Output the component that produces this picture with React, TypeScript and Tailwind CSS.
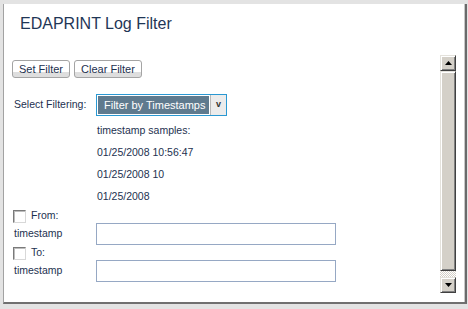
import React from 'react';

const font = { fontFamily: '"Liberation Sans", Arial, sans-serif' };

const Bevel: React.FC<{ className?: string; children?: React.ReactNode }> = ({ className = '', children }) => (
  <div
    className={`bg-[#d4d0c8] border border-t-[#e4e2dc] border-l-[#e4e2dc] border-r-[#404040] border-b-[#404040] shadow-[inset_1px_1px_0_#ffffff,inset_-1px_-1px_0_#808080] flex items-center justify-center ${className}`}
  >
    {children}
  </div>
);

const Arrow: React.FC<{ up?: boolean }> = ({ up }) => (
  <svg width="7" height="4" viewBox="0 0 7 4">
    {up ? <polygon points="3.5,0 7,4 0,4" fill="#000" /> : <polygon points="0,0 7,0 3.5,4" fill="#000" />}
  </svg>
);

const Checkbox: React.FC = () => (
  <span className="w-[13px] h-[13px] bg-white border border-t-[#7a7a7a] border-l-[#7a7a7a] border-r-[#d8d8d8] border-b-[#d8d8d8] shadow-[inset_1px_1px_0_#bdbdbd]" />
);

const Btn: React.FC<{ label: string; w: string }> = ({ label, w }) => (
  <button
    className={`${w} h-[18px] rounded-[3px] border border-[#a4a4a4] bg-[linear-gradient(#ffffff_0,#ffffff_68%,#dedede_69%,#dedede_100%)] text-[11px] text-[#1d3150] leading-none`}
  >
    {label}
  </button>
);

export default function App() {
  return (
    <div className="w-[468px] h-[309px] bg-[#e3e3e3] overflow-hidden pt-[4px] pl-[3px]" style={font}>
      <div className="w-[464px] h-[300px] bg-white border-l border-l-[#a2a2a2] border-r-2 border-r-[#6a6a6a] border-b-2 border-b-[#707070] shadow-[inset_-1px_0_0_#c8c8c8] flex">
        <div className="flex-1 pl-[8px] text-[#1d3150] text-[10.5px]">
          <h1 className="mt-[10px] ml-[8px] text-[16px] leading-[20px] text-[#1f3656]">EDAPRINT Log Filter</h1>

          <div className="mt-[26px] flex gap-[4px]">
            <Btn label="Set Filter" w="w-[58px]" />
            <Btn label="Clear Filter" w="w-[68px]" />
          </div>

          <div className="mt-[16px] grid grid-cols-[84px_1fr]">
            <div className="h-[22px] pl-[2px] flex items-center">Select Filtering:</div>
            <div className="w-[131px] h-[22px] border border-[#2a98d2] flex">
              <div className="flex-1 border border-white bg-[#5f7a8e] text-white text-[11px] flex items-center pl-[6px]">
                Filter by Timestamps
              </div>
              <div className="w-[16px] bg-[#ececec] border-l border-[#b8b8b8] flex items-center justify-center text-[9px] font-bold text-[#333]">
                v
              </div>
            </div>

            <div />
            <div className="mt-[4px] pl-[1px]">
              <div className="h-[22px] flex items-center">timestamp samples:</div>
              <div className="h-[22px] flex items-center">01/25/2008 10:56:47</div>
              <div className="h-[22px] flex items-center">01/25/2008 10</div>
              <div className="h-[22px] flex items-center">01/25/2008</div>
            </div>

            <div className="col-span-2 mt-[1px] h-[14px] flex items-center gap-[5px] pl-[1px]">
              <Checkbox />
              <span>From:</span>
            </div>
            <div className="h-[22px] pl-[2px] flex items-center">timestamp</div>
            <input className="w-[240px] h-[22px] border border-[#96a8c4] outline-none" />

            <div className="col-span-2 mt-[1px] h-[14px] flex items-center gap-[5px] pl-[1px]">
              <Checkbox />
              <span>To:</span>
            </div>
            <div className="h-[22px] pl-[2px] flex items-center">timestamp</div>
            <input className="w-[240px] h-[22px] border border-[#96a8c4] outline-none" />
          </div>
        </div>

        <div className="mt-[51px] mr-[9px] w-[16px] h-[238px] flex flex-col bg-[#ebe9e4]">
          <Bevel className="h-[16px]">
            <Arrow up />
          </Bevel>
          <Bevel className="h-[200px]" />
          <div className="flex-1 bg-[repeating-conic-gradient(#d4d0c8_0_25%,#ffffff_0_50%)] bg-[length:2px_2px]" />
          <Bevel className="h-[16px]">
            <Arrow />
          </Bevel>
        </div>
      </div>
    </div>
  );
}
